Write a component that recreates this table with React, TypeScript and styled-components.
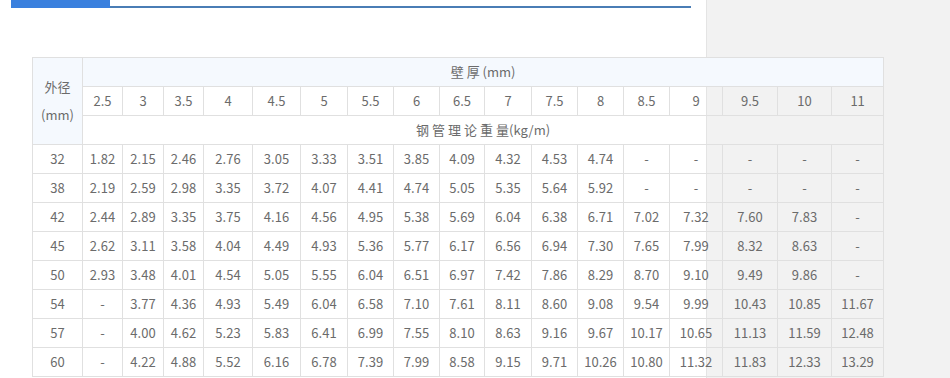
import React from "react";
import styled, { createGlobalStyle } from "styled-components";

const Global = createGlobalStyle`
  html, body { margin: 0; padding: 0; overflow: hidden; background: #fff; }
  body { font-family: "Noto Sans CJK SC", "Noto Sans", sans-serif; color: #6b6b6b; }
`;

const Page = styled.div`
  display: flex;
  min-height: 100vh;
`;

const Main = styled.div`
  position: relative;
  z-index: 1;
  flex: none;
  width: 706px;
`;

const Sidebar = styled.aside`
  flex: 1;
  background: #f2f2f2;
  border-left: 1px solid #e4e4e4;
`;

const TabBar = styled.div`
  margin: 0 15px 0 11px;
  height: 6px;
  border-bottom: 2px solid #4a7db5;
`;

const ActiveTab = styled.div`
  width: 99px;
  height: 8px;
  background: #3a80de;
`;

const TableWrap = styled.div`
  padding: 49px 0 0 32px;
`;

const Table = styled.table`
  border-collapse: collapse;
  table-layout: fixed;
  width: 852px;
  font-size: 13px;
  color: #6b6b6b;
`;

const Col = styled.col<{ $w: number }>`
  width: ${(p) => p.$w}px;
`;

const Cell = styled.td<{ $head?: boolean }>`
  border: 1px solid #e0e0e0;
  height: 28px;
  padding: 0;
  line-height: 28px;
  text-align: center;
  white-space: nowrap;
  background: ${(p) => (p.$head ? "#f5f9fe" : "transparent")};
`;

const Spaced = styled.span<{ $ls: number }>`
  letter-spacing: ${(p) => p.$ls}px;
`;

const widths = [50, 40, 41, 40, 49, 48, 47, 46, 46, 45, 47, 46, 46, 46, 53, 55, 54, 52];
const thick = ["2.5", "3", "3.5", "4", "4.5", "5", "5.5", "6", "6.5", "7", "7.5", "8", "8.5", "9", "9.5", "10", "11"];

const rows: [string, string[]][] = [
  ["32", "1.82 2.15 2.46 2.76 3.05 3.33 3.51 3.85 4.09 4.32 4.53 4.74 - - - - -".split(" ")],
  ["38", "2.19 2.59 2.98 3.35 3.72 4.07 4.41 4.74 5.05 5.35 5.64 5.92 - - - - -".split(" ")],
  ["42", "2.44 2.89 3.35 3.75 4.16 4.56 4.95 5.38 5.69 6.04 6.38 6.71 7.02 7.32 7.60 7.83 -".split(" ")],
  ["45", "2.62 3.11 3.58 4.04 4.49 4.93 5.36 5.77 6.17 6.56 6.94 7.30 7.65 7.99 8.32 8.63 -".split(" ")],
  ["50", "2.93 3.48 4.01 4.54 5.05 5.55 6.04 6.51 6.97 7.42 7.86 8.29 8.70 9.10 9.49 9.86 -".split(" ")],
  ["54", "- 3.77 4.36 4.93 5.49 6.04 6.58 7.10 7.61 8.11 8.60 9.08 9.54 9.99 10.43 10.85 11.67".split(" ")],
  ["57", "- 4.00 4.62 5.23 5.83 6.41 6.99 7.55 8.10 8.63 9.16 9.67 10.17 10.65 11.13 11.59 12.48".split(" ")],
  ["60", "- 4.22 4.88 5.52 6.16 6.78 7.39 7.99 8.58 9.15 9.71 10.26 10.80 11.32 11.83 12.33 13.29".split(" ")],
];

export default function App() {
  return (
    <>
      <Global />
      <Page>
        <Main>
          <TabBar>
            <ActiveTab />
          </TabBar>
          <TableWrap>
            <Table>
              <colgroup>
                {widths.map((w, i) => (
                  <Col key={i} $w={w} />
                ))}
              </colgroup>
              <tbody>
                <tr>
                  <Cell $head rowSpan={3}>
                    外径
                    <br />
                    (mm)
                  </Cell>
                  <Cell $head colSpan={17}>
                    <Spaced $ls={3}>壁</Spaced>厚 (mm)
                  </Cell>
                </tr>
                <tr>
                  {thick.map((t) => (
                    <Cell key={t}>{t}</Cell>
                  ))}
                </tr>
                <tr>
                  <Cell colSpan={17}>
                    <Spaced $ls={3}>钢管理论重</Spaced>量(kg/m)
                  </Cell>
                </tr>
                {rows.map(([d, vals]) => (
                  <tr key={d}>
                    <Cell>{d}</Cell>
                    {vals.map((v, i) => (
                      <Cell key={i}>{v}</Cell>
                    ))}
                  </tr>
                ))}
              </tbody>
            </Table>
          </TableWrap>
        </Main>
        <Sidebar />
      </Page>
    </>
  );
}
